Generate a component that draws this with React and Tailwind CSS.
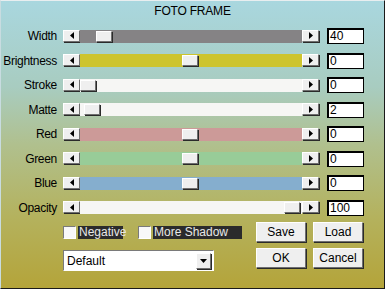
import React from 'react'

const rows = [
  { label: 'Width', value: '40', track: 'bg-[#858385]', thumb: 16 },
  { label: 'Brightness', value: '0', track: 'bg-[#cdc42e]', thumb: 102 },
  { label: 'Stroke', value: '0', track: 'bg-[#f6f6f4]', thumb: 0 },
  { label: 'Matte', value: '2', track: 'bg-[#f6f6f4]', thumb: 4 },
  { label: 'Red', value: '0', track: 'bg-[#cc9a98]', thumb: 102 },
  { label: 'Green', value: '0', track: 'bg-[#98cc98]', thumb: 102 },
  { label: 'Blue', value: '0', track: 'bg-[#85aece]', thumb: 102 },
  { label: 'Opacity', value: '100', track: 'bg-[#f6f6f4]', thumb: 204 },
]

const bevel =
  'bg-[#efefef] border border-t-white border-l-white border-r-[#6f6f6f] border-b-[#6f6f6f] shadow-[1px_1px_0_#2a2a2a]'

const ArrowLeft = () => (
  <svg width="4" height="7" viewBox="0 0 4 7">
    <path d="M4 0 L0 3.5 L4 7 Z" fill="#000" />
  </svg>
)

const ArrowRight = () => (
  <svg width="4" height="7" viewBox="0 0 4 7">
    <path d="M0 0 L4 3.5 L0 7 Z" fill="#000" />
  </svg>
)

const Slider = ({ track, thumb }) => (
  <div className="flex w-[256px] h-[13px]">
    <div className={`w-[17px] h-[12px] flex items-center justify-center ${bevel}`}>
      <ArrowLeft />
    </div>
    <div className={`relative flex-1 h-[13px] ${track}`}>
      <div
        className={`absolute top-[1px] w-[16px] h-[11px] ${bevel}`}
        style={{ left: thumb }}
      />
    </div>
    <div className={`w-[17px] h-[12px] flex items-center justify-center ${bevel}`}>
      <ArrowRight />
    </div>
  </div>
)

const Button = ({ children }) => (
  <button className={`w-[50px] h-[20px] text-[12px] leading-none text-black ${bevel}`}>
    {children}
  </button>
)

const Check = ({ label, w }) => (
  <div className="flex items-center gap-[2px]">
    <div className="w-[13px] h-[13px] bg-[#f8f8f8] border border-t-[#7a7a7a] border-l-[#7a7a7a] border-r-white border-b-white" />
    <div className={`h-[13px] ${w} bg-[#2b2b2b] text-[#e8e8e8] text-[12px] leading-[13px] pl-[1px]`}>
      {label}
    </div>
  </div>
)

export default function App() {
  return (
    <div
      className="w-[385px] h-[289px] flex flex-col border border-t-[#e8eef0] border-l-[#c8dce0] border-r-[#1a1a1a] border-b-[#1a1a1a] bg-[linear-gradient(to_bottom,#a9d7df_0%,#a8ccc0_30%,#b0c08e_50%,#b4b25e_75%,#b4a43a_100%)] text-black"
      style={{ fontFamily: '"Liberation Sans", Arial, sans-serif' }}
    >
      <div className="h-[22px] pt-[3px] text-center text-[12px] leading-[14px] tracking-[-0.2px]">
        FOTO FRAME
      </div>

      <div className="flex flex-col pt-[1px]">
        {rows.map((r) => (
          <div key={r.label} className="flex items-center h-[24.5px]">
            <div className="w-[56px] text-right text-[12px] tracking-[-0.3px]">{r.label}</div>
            <div className="ml-[6px]">
              <Slider track={r.track} thumb={r.thumb} />
            </div>
            <div className="ml-[8px] w-[37px] h-[16px] bg-white border border-black border-t-2 border-l-2 text-[12px] leading-[13px] pl-[1px]">
              {r.value}
            </div>
          </div>
        ))}
      </div>

      <div className="flex pl-[62px] pt-[2px]">
        <div className="flex flex-col w-[193px]">
          <div className="flex items-center gap-[15px] h-[20px]">
            <Check label="Negative" w="w-[45px]" />
            <Check label="More Shadow" w="w-[89px]" />
          </div>
          <div className="mt-[8px] w-[151px] h-[21px] bg-white border border-t-[#7a7a7a] border-l-[#7a7a7a] border-r-white border-b-white flex items-center justify-between pl-[3px] pr-[2px] text-[12px]">
            <span>Default</span>
            <div className={`w-[15px] h-[16px] flex items-center justify-center ${bevel}`}>
              <svg width="7" height="4" viewBox="0 0 7 4">
                <path d="M0 0 L7 0 L3.5 4 Z" fill="#000" />
              </svg>
            </div>
          </div>
        </div>
        <div className="flex flex-col gap-[6px]">
          <div className="flex gap-[7px]">
            <Button>Save</Button>
            <Button>Load</Button>
          </div>
          <div className="flex gap-[7px]">
            <Button>OK</Button>
            <Button>Cancel</Button>
          </div>
        </div>
      </div>
    </div>
  )
}
